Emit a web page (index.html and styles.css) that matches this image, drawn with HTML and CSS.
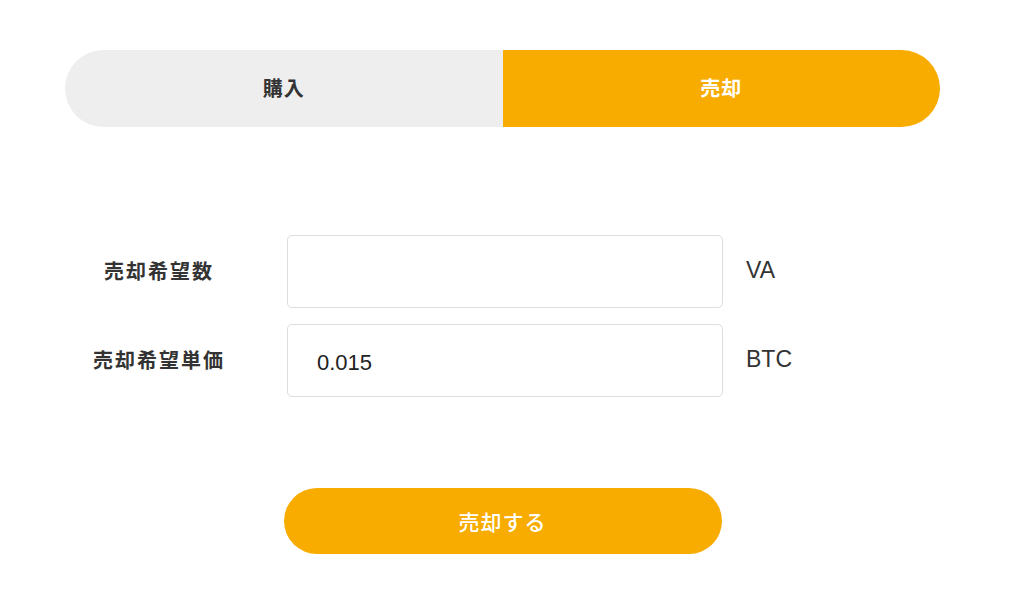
FILE: index.html
```html
<!DOCTYPE html>
<html lang="ja">
<head>
    <meta charset="UTF-8">
    <meta name="viewport" content="width=device-width, initial-scale=1.0">
    <title>売却</title>
    <link rel="stylesheet" href="styles.css">
</head>
<body>
    <div class="container">
        <div class="tabs">
            <div class="tab">購入</div>
            <div class="tab active">売却</div>
        </div>
        <div class="form">
            <div class="row">
                <label class="label" for="amount">売却希望数</label>
                <input class="field" type="text" id="amount">
                <span class="unit">VA</span>
            </div>
            <div class="row">
                <label class="label" for="price">売却希望単価</label>
                <input class="field" type="text" id="price" value="0.015">
                <span class="unit">BTC</span>
            </div>
        </div>
        <button class="submit">売却する</button>
    </div>
</body>
</html>
```

FILE: styles.css
```css
body {
    margin: 0;
    background: #fff;
    color: #333;
    font-family: "Liberation Sans", "Noto Sans CJK JP", sans-serif;
}
.container {
    width: 875px;
    margin: 50px 0 0 65px;
}
.tabs {
    display: flex;
    height: 77px;
}
.tab {
    flex: 1;
    display: flex;
    align-items: center;
    justify-content: center;
    padding-bottom: 3px;
    background: #eeeeee;
    color: #333;
    font-size: 20px;
    font-weight: bold;
    letter-spacing: 1px;
    border-radius: 38.5px 0 0 38.5px;
}
.tab.active {
    background: #f8ac00;
    color: #fff;
    border-radius: 0 38.5px 38.5px 0;
}
.form {
    display: flex;
    flex-direction: column;
    gap: 16px;
    margin-top: 108px;
}
.row {
    display: flex;
    align-items: center;
    height: 73px;
}
.label {
    width: 188px;
    margin-top: -3px;
    text-align: center;
    font-size: 20px;
    font-weight: bold;
    letter-spacing: 2px;
    color: #333;
}
.field {
    box-sizing: border-box;
    width: 436px;
    height: 73px;
    margin-left: 34px;
    padding: 4px 29px 0;
    border: 1px solid #dddddd;
    border-radius: 5px;
    font-family: "Liberation Sans", sans-serif;
    font-size: 22px;
    color: #222;
    outline: none;
}
.unit {
    margin-left: 23px;
    margin-top: -2px;
    font-size: 23px;
    color: #333;
}
.submit {
    display: block;
    width: 438px;
    height: 66px;
    margin: 91px auto 0;
    padding-bottom: 2px;
    border: none;
    border-radius: 33px;
    background: #f8ac00;
    color: #fff;
    font-family: "Liberation Sans", "Noto Sans CJK JP", sans-serif;
    font-size: 21px;
    font-weight: 500;
    letter-spacing: 1px;
    cursor: pointer;
}
```
